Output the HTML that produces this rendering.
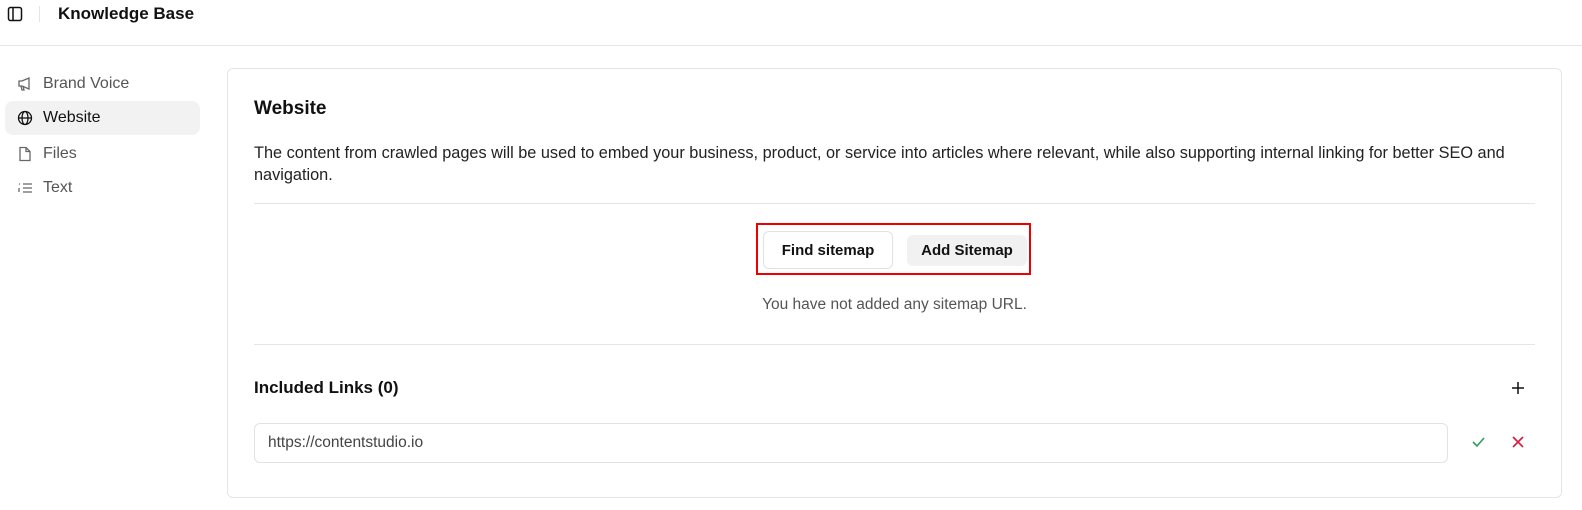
<!DOCTYPE html>
<html><head><style>
*{box-sizing:border-box;margin:0;padding:0}
body{width:1582px;height:510px;background:#fff;font-family:"Liberation Sans",sans-serif;color:#111;position:relative;overflow:hidden}
.abs{position:absolute}
.nav{position:absolute;left:5px;width:195px;height:34px;display:flex;align-items:center;padding-left:12px;font-size:16px;color:#555;border-radius:8px}
.nav svg{margin-right:10px}
</style></head><body>
<div class="abs" style="left:0;top:45px;width:1582px;height:1px;background:#e5e5e5"></div>
<svg class="abs" style="left:7px;top:6px" width="16" height="16" viewBox="0 0 16 16" fill="none" stroke="#111" stroke-width="1.5"><rect x="1.5" y="1.5" width="13" height="13" rx="2"/><line x1="6" y1="1.5" x2="6" y2="14.5"/></svg>
<div class="abs" style="left:39px;top:6px;width:1px;height:16px;background:#e5e5e5"></div>
<div class="abs" style="left:58px;top:4px;font-size:17px;font-weight:bold">Knowledge Base</div>

<div class="nav" style="top:67px"><svg width="16" height="16" viewBox="0 0 16 16" fill="none" stroke="#666" stroke-width="1.3"><path d="M2 5h3l7-3v11l-7-3H2z"/><path d="M4 10l1 4h2l-1-4"/></svg>Brand Voice</div>
<div class="nav" style="top:101px;background:#f2f2f2;color:#111"><svg width="16" height="16" viewBox="0 0 16 16" fill="none" stroke="#111" stroke-width="1.3"><circle cx="8" cy="8" r="6.5"/><ellipse cx="8" cy="8" rx="3" ry="6.5"/><line x1="1.5" y1="8" x2="14.5" y2="8"/></svg>Website</div>
<div class="nav" style="top:137px"><svg width="16" height="16" viewBox="0 0 16 16" fill="none" stroke="#666" stroke-width="1.3"><path d="M3 1.5h6l4 4v9H3z"/><path d="M9 1.5v4h4"/></svg>Files</div>
<div class="nav" style="top:171px"><svg width="16" height="16" viewBox="0 0 16 16" fill="none" stroke="#666" stroke-width="1.3"><path d="M6 4h9M6 8h9M6 12h9M2 4h1M2 8v4"/></svg>Text</div>

<div class="abs" style="left:227px;top:68px;width:1335px;height:430px;border:1px solid #e5e5e5;border-radius:6px"></div>
<div class="abs" style="left:254px;top:98px;font-size:19px;font-weight:bold">Website</div>
<div class="abs" style="left:254px;top:142px;width:1270px;font-size:16.3px;line-height:22px;color:#222">The content from crawled pages will be used to embed your business, product, or service into articles where relevant, while also supporting internal linking for better SEO and navigation.</div>
<div class="abs" style="left:254px;top:203px;width:1281px;height:1px;background:#e5e5e5"></div>
<div class="abs" style="left:756px;top:223px;width:275px;height:52px;border:2px solid #e00"></div>
<div class="abs" style="left:763px;top:231px;width:130px;height:38px;border:1px solid #e2e2e2;border-radius:6px;font-size:15px;font-weight:bold;display:flex;align-items:center;justify-content:center">Find sitemap</div>
<div class="abs" style="left:907px;top:235px;width:120px;height:31px;background:#f1f1f1;border-radius:6px;font-size:15px;font-weight:bold;display:flex;align-items:center;justify-content:center">Add Sitemap</div>
<div class="abs" style="left:254px;top:296px;width:1281px;text-align:center;font-size:15.5px;color:#555">You have not added any sitemap URL.</div>
<div class="abs" style="left:254px;top:344px;width:1281px;height:1px;background:#e5e5e5"></div>
<div class="abs" style="left:254px;top:378px;font-size:17px;font-weight:bold">Included Links (0)</div>
<svg class="abs" style="left:1511px;top:381px" width="14" height="14" viewBox="0 0 14 14" stroke="#111" stroke-width="1.5"><path d="M7 1v12M1 7h12"/></svg>
<div class="abs" style="left:254px;top:423px;width:1194px;height:40px;border:1px solid #e2e2e2;border-radius:6px;padding-left:13px;display:flex;align-items:center;font-size:15.5px;color:#444">https://contentstudio.io</div>
<svg class="abs" style="left:1471px;top:435px" width="15" height="14" viewBox="0 0 15 14" fill="none" stroke="#2e9e5b" stroke-width="1.6"><path d="M2 7l4 4 7-8"/></svg>
<svg class="abs" style="left:1512px;top:436px" width="12" height="12" viewBox="0 0 12 12" stroke="#d81b3a" stroke-width="1.6"><path d="M1 1l10 10M11 1L1 11"/></svg>
</body></html>
